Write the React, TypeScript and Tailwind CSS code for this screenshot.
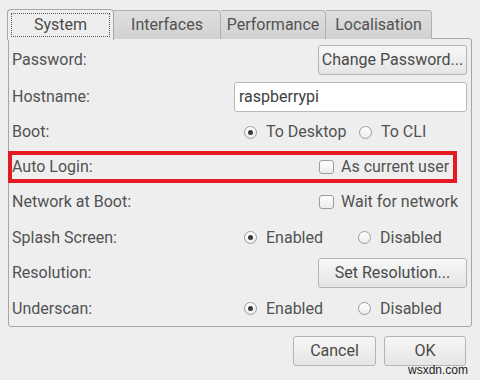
import React from "react";

const font = { fontFamily: "Roboto, 'Liberation Sans', sans-serif" };

function Radio({ checked, label }: { checked?: boolean; label: string }) {
  return (
    <div className="flex items-center">
      <span className="w-[13px] h-[13px] rounded-full border border-[#9c9c9c] bg-gradient-to-b from-[#ffffff] to-[#ececec] flex items-center justify-center">
        {checked && <span className="w-[5px] h-[5px] rounded-full bg-[#3a3a3a]" />}
      </span>
      <span className="ml-[9px]">{label}</span>
    </div>
  );
}

function Check({ label }: { label: string }) {
  return (
    <div className="flex items-center">
      <span className="w-[15px] h-[14px] rounded-[3px] border border-[#9c9c9c] bg-gradient-to-b from-[#ffffff] to-[#ececec]" />
      <span className="ml-[7px]">{label}</span>
    </div>
  );
}

function Button({ label, className }: { label: string; className: string }) {
  return (
    <div
      className={
        "h-[30px] flex items-center justify-center rounded-[3px] border border-[#b4b4b4] bg-gradient-to-b from-[#f7f7f7] to-[#e5e5e5] text-[#4a4a4a] " +
        className
      }
    >
      {label}
    </div>
  );
}

export default function App() {
  return (
    <div
      className="relative w-[480px] h-[380px] bg-[#eeeeee] text-[16px] text-[#525252] overflow-hidden"
      style={font}
    >
      {/* Tabs */}
      <div className="flex items-end h-[39px] pl-[7px] pt-[8px]">
        <div className="relative z-10 w-[107px] h-[31px] -mb-[1px] border border-b-0 border-[#a6a6a6] rounded-t-[4px] bg-[#eeeeee] flex items-center justify-center p-[3px]">
          <div className="w-full h-full border border-dotted border-[#555] flex items-center justify-center text-[#4a4a4a]">
            System
          </div>
        </div>
        <div className="w-[107px] h-[29px] border border-b-0 border-l-0 border-[#b0b0b0] rounded-tr-[4px] bg-gradient-to-b from-[#dedede] to-[#d2d2d2] flex items-center justify-center">
          Interfaces
        </div>
        <div className="w-[105px] h-[29px] border border-b-0 border-l-0 border-[#b0b0b0] rounded-tr-[4px] bg-gradient-to-b from-[#dedede] to-[#d2d2d2] flex items-center justify-center">
          Performance
        </div>
        <div className="w-[106px] h-[29px] border border-b-0 border-l-0 border-[#b0b0b0] rounded-tr-[4px] bg-gradient-to-b from-[#dedede] to-[#d2d2d2] flex items-center justify-center">
          Localisation
        </div>
      </div>

      {/* Frame */}
      <div className="ml-[8px] w-[464px] h-[289px] -mt-[1px] border border-[#a6a6a6] rounded-b-[3px] rounded-tr-[3px] flex flex-col pl-[3px] pr-[4px] pt-[2px]">
        <div className="h-[38px] pt-[1px] flex items-center justify-between">
          <span>Password:</span>
          <Button label="Change Password..." className="w-[149px]" />
        </div>
        <div className="h-[36px] flex items-center justify-between">
          <span>Hostname:</span>
          <div className="w-[233px] h-[30px] rounded-[3px] border border-[#b8b8b8] bg-white flex items-center pl-[4px] text-[#404040]">
            raspberrypi
          </div>
        </div>
        <div className="h-[35px] flex items-center">
          <span>Boot:</span>
          <div className="ml-auto w-[223px] flex items-center">
            <div className="w-[115px]">
              <Radio checked label="To Desktop" />
            </div>
            <Radio label="To CLI" />
          </div>
        </div>
        <div className="h-[35px] flex items-center">
          <span>Auto Login:</span>
          <div className="ml-auto w-[148px]">
            <Check label="As current user" />
          </div>
        </div>
        <div className="h-[36px] flex items-center">
          <span>Network at Boot:</span>
          <div className="ml-auto w-[148px]">
            <Check label="Wait for network" />
          </div>
        </div>
        <div className="h-[35px] flex items-center">
          <span>Splash Screen:</span>
          <div className="ml-auto w-[223px] flex items-center">
            <div className="w-[114px]">
              <Radio checked label="Enabled" />
            </div>
            <Radio label="Disabled" />
          </div>
        </div>
        <div className="h-[36px] flex items-center justify-between">
          <span>Resolution:</span>
          <Button label="Set Resolution..." className="w-[149px]" />
        </div>
        <div className="h-[35px] flex items-center">
          <span>Underscan:</span>
          <div className="ml-auto w-[223px] flex items-center">
            <div className="w-[114px]">
              <Radio checked label="Enabled" />
            </div>
            <Radio label="Disabled" />
          </div>
        </div>
      </div>

      {/* Dialog buttons */}
      <div className="flex justify-end gap-[8px] pr-[14px] mt-[9px]">
        <Button label="Cancel" className="w-[83px]" />
        <Button label="OK" className="w-[82px]" />
      </div>

      {/* Red highlight annotation */}
      <div className="absolute left-[8px] top-[151px] w-[449px] h-[32px] border-[4px] border-[#e41b23] pointer-events-none" />

      {/* Watermark */}
      <div
        className="absolute left-[408px] top-[364px] text-[12px] text-[#222] leading-none"
        style={{ fontFamily: "'Liberation Sans', sans-serif" }}
      >
        wsxdn.com
      </div>
    </div>
  );
}
